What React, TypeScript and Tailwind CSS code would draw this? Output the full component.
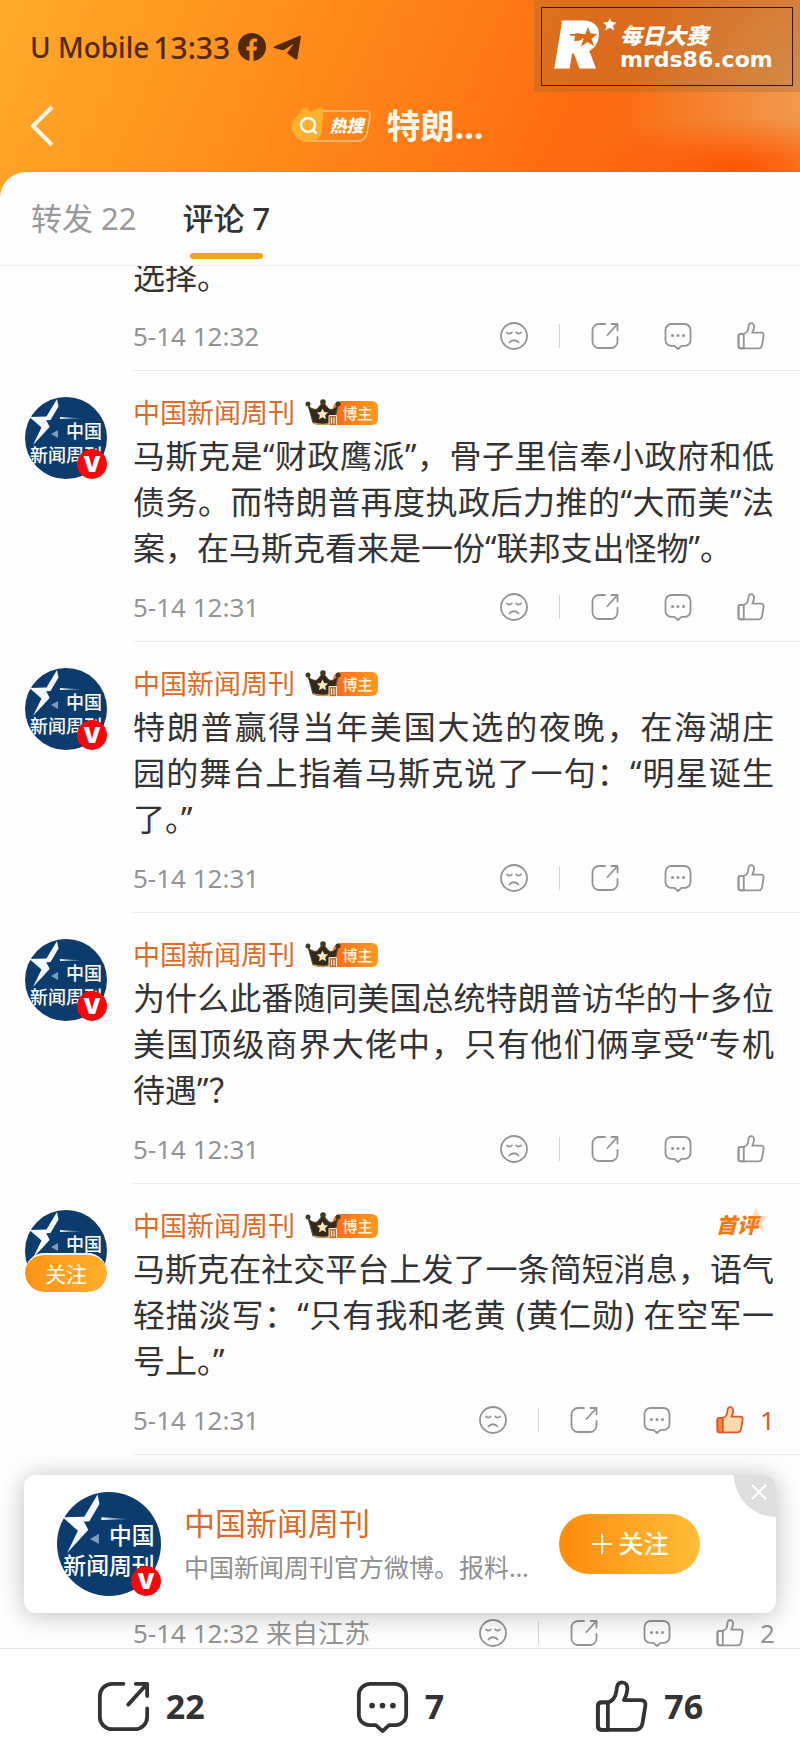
import type { ReactNode } from 'react';
import clsx from 'clsx';

type IconProps = { className?: string };

type Comment = {
  id: number;
  lines: string[];
  date: string;
  likes?: number;
  liked?: boolean;
  follow?: boolean;
  first?: boolean;
};

const comments: Comment[] = [
  {
    id: 1,
    lines: [
      '马斯克是“财政鹰派”，骨子里信奉小政府和低',
      '债务。而特朗普再度执政后力推的“大而美”法',
      '案，在马斯克看来是一份“联邦支出怪物”。',
    ],
    date: '5-14 12:31',
  },
  {
    id: 2,
    lines: [
      '特朗普赢得当年美国大选的夜晚，在海湖庄',
      '园的舞台上指着马斯克说了一句：“明星诞生',
      '了。”',
    ],
    date: '5-14 12:31',
  },
  {
    id: 3,
    lines: [
      '为什么此番随同美国总统特朗普访华的十多位',
      '美国顶级商界大佬中，只有他们俩享受“专机',
      '待遇”？',
    ],
    date: '5-14 12:31',
  },
  {
    id: 4,
    lines: [
      '马斯克在社交平台上发了一条简短消息，语气',
      '轻描淡写：“只有我和老黄 (黄仁勋) 在空军一',
      '号上。”',
    ],
    date: '5-14 12:31',
    likes: 1,
    liked: true,
    follow: true,
    first: true,
  },
];

function Svg({ className, children }: IconProps & { children: ReactNode }) {
  return (
    <svg
      viewBox="0 0 28 28"
      fill="none"
      stroke="currentColor"
      strokeLinecap="round"
      strokeLinejoin="round"
      className={className}
      aria-hidden="true"
    >
      {children}
    </svg>
  );
}

function SadIcon({ className }: IconProps) {
  return (
    <Svg className={className}>
      <circle cx="14" cy="14" r="13" />
      <path d="M7 10.5c1 1.4 3.6 1.4 4.8 0M16.2 10.5c1 1.4 3.6 1.4 4.8 0M9.5 20.5c2-3 7-3 9 0" />
    </Svg>
  );
}

function ShareIcon({ className }: IconProps) {
  return (
    <Svg className={className}>
      <path d="M14 2H8a6.5 6.5 0 0 0-6.5 6.5v11A6.5 6.5 0 0 0 8 26h12a6.5 6.5 0 0 0 6.5-6.5V15" />
      <path d="M20.5 2h6v6.5M26 2.5 16.5 13" />
    </Svg>
  );
}

function CommentIcon({ className }: IconProps) {
  return (
    <Svg className={className}>
      <path d="M7.5 2h13a6 6 0 0 1 6 6v10.3a5.5 5.5 0 0 1-5.5 5.5h-3.500L14 27l-3.500-3.200H7a5.500 5.500 0 0 1-5.500-5.500V8a6 6 0 0 1 6-6z" />
      <path strokeWidth="3" d="M8.500 13.500h.01M14 13.500h.01M19.500 13.500h.01" />
    </Svg>
  );
}

function LikeIcon({ className, filled }: IconProps & { filled?: boolean }) {
  return (
    <Svg className={className}>
      <path
        fill={filled ? '#ffd9ae' : 'none'}
        d="M3.500 11.800H6c3 0 5-2.800 5.300-6C11.500 2.600 12.200 1.200 14 1.200c2.200 0 3.200 1.500 3.100 3.600-.1 2.200-.8 4-1.800 5.800h9c1.700 0 2.600 1.200 2.300 3l-1.500 9.200c-.3 2-1.700 3.500-3.700 3.500H3.500c-1.200 0-2-.8-2-2V13.800c0-1.200.8-2 2-2z"
      />
      <path
        fill={filled ? '#f58a2e' : 'none'}
        d="M6.800 11.800v14.500H3.500c-1.200 0-2-.8-2-2V13.800c0-1.200.8-2 2-2z"
      />
    </Svg>
  );
}

function Avatar({ className }: IconProps) {
  return (
    <svg viewBox="0 0 82 82" className={className} role="img" aria-label="中国新闻周刊">
      <defs>
        <linearGradient id="trail" x1="0" x2="1">
          <stop offset="0" stopColor="#fff" />
          <stop offset="1" stopColor="#fff" stopOpacity="0" />
        </linearGradient>
        <clipPath id="disc">
          <circle cx="41" cy="41" r="41" />
        </clipPath>
      </defs>
      <circle cx="41" cy="41" r="41" fill="#0c3b6e" />
      <path
        fill="#f4faff"
        d="M32 2 33.500 9.500 25.500 23 18.500 23.500 24.500 30 8 48 16.500 30.500 4.500 20 21.500 19.500z"
      />
      <path fill="#f4faff" d="M12 21.500 20 21l4.500 8.500L14 41l3.500-11z" />
      <path fill="url(#trail)" d="M35 20v2l24-.5z" />
      <path fill="#7c9cc0" d="m26 37 7-4v8z" />
      <g
        fill="#fff"
        clipPath="url(#disc)"
        fontSize="18"
        fontWeight="500"
        fontFamily="'Noto Sans CJK SC', sans-serif"
      >
        <text x="41" y="41">中国</text>
        <text x="5" y="65">新闻周刊</text>
      </g>
    </svg>
  );
}

function VerifiedMark() {
  return (
    <span className="absolute right-0 bottom-0 flex size-[30px] items-center justify-center rounded-full bg-[#f7070c] font-['Inter'] text-[22px] leading-none font-black text-white">
      V
    </span>
  );
}

function AuthorBadge() {
  return (
    <span className="flex items-center">
      <svg viewBox="0 0 36 28" className="relative z-10 h-7 w-9" aria-hidden="true">
        <path fill="#33291c" stroke="#5b4a2a" d="M3 6c3 4 7 5 9 4l6-7 6 7c3 1 6 0 9-4l-4 18c-7 2-15 2-21 0z" />
        <path stroke="#c99b54" strokeWidth="1.500" d="M8 24c7 2 13 2 19 0" fill="none" />
        <g fill="#3f3a22">
          <circle cx="3" cy="5" r="2.500" />
          <circle cx="18" cy="3" r="2.800" />
          <circle cx="33" cy="5" r="2.500" />
        </g>
        <path fill="#ffe9bd" d="m17.500 9.500 1.700 3.600 3.900.5-2.900 2.700.8 3.900-3.500-1.900-3.500 1.900.8-3.900-2.900-2.700 3.900-.5z" />
        <path fill="#b5713a" stroke="#ffe3c0" d="M24 16.500h7.500v10H24z" />
        <path stroke="#fff" d="M26.500 18.500v6M29 18.500v6" />
      </svg>
      <span className="-ml-2 flex h-6 w-[45px] items-center justify-center rounded-r-md rounded-tl-lg bg-linear-to-r from-[#fa6a1c] to-[#ff9a1c] pl-1 text-[15px] font-medium text-[#fff3e0]">
        博主
      </span>
    </span>
  );
}

function Actions({ date, likes, liked }: { date: string; likes?: number; liked?: boolean }) {
  return (
    <div className="flex h-9 items-center justify-between text-[26px] text-[#949494]">
      <time className="leading-9">{date}</time>
      <div className={clsx('flex items-center stroke-[1.800]', likes === undefined && 'mr-[9px]')}>
        <button aria-label="踩">
          <SadIcon className="size-7" />
        </button>
        <span className="mx-[31px] h-6 w-px bg-[#d4d4d4]" />
        <div className="flex items-center gap-[45px]">
          <button aria-label="转发">
            <ShareIcon className="size-7" />
          </button>
          <button aria-label="评论">
            <CommentIcon className="size-7" />
          </button>
          <button aria-label="赞" className={clsx('flex items-center gap-4', liked && 'text-[#e2562c]')}>
            <LikeIcon className="size-7" filled={liked} />
            {likes !== undefined && <span className="w-[14px] text-center leading-9">{likes}</span>}
          </button>
        </div>
      </div>
    </div>
  );
}

function CommentRow({ comment }: { comment: Comment }) {
  return (
    <li className="flex pl-[25px]">
      <div className="relative mt-[26px] h-[82px] w-[82px] shrink-0">
        <Avatar className="size-full" />
        {comment.follow ? (
          <>
            <span className="absolute inset-x-0 bottom-0 h-7 bg-white" />
            <button className="absolute inset-x-0 bottom-0 h-[39px] rounded-full border-t-2 border-white bg-linear-to-r from-[#ff9417] to-[#ffae2b] text-[21px] leading-8 text-white">
              关注
            </button>
          </>
        ) : (
          <VerifiedMark />
        )}
      </div>
      <article className="ml-[26px] flex-1 border-b border-[#ebebeb] pt-[22px] pr-[26px] pb-4">
        <div className="flex h-10 items-center">
          <a href="#profile" className="mr-[10px] text-[27px] leading-10 text-[#dd6a28]">
            中国新闻周刊
          </a>
          <AuthorBadge />
          {comment.first && (
            <span className="relative mr-4 ml-auto text-[21px] font-black text-[#f07a12] italic">
              <svg viewBox="0 0 24 24" className="absolute -top-1 -right-3 size-7 fill-[#fde0c4]" aria-hidden="true">
                <path d="m12 1 3.200 7.300 7.800.7-5.900 5.200 1.800 7.800-6.900-4.200L5 22l1.900-7.800L1 9l7.800-.7z" />
              </svg>
              <span className="relative">首评</span>
            </span>
          )}
        </div>
        <p className="mb-[18px] text-[32px] leading-[46px] whitespace-nowrap text-[#333]">
          {comment.lines.map((line) => (
            <span key={line} className="block text-justify not-last:[text-align-last:justify]">
              {line}
            </span>
          ))}
        </p>
        <Actions date={comment.date} likes={comment.likes} liked={comment.liked} />
      </article>
    </li>
  );
}

function Watermark() {
  return (
    <div className="absolute top-0 right-0 h-[92px] w-[266px] bg-[#8a6a3a]/30 p-[7px] pb-[6px]">
      <div className="flex h-full items-center border border-[#3a1606] pl-3 text-white">
        <svg viewBox="0 0 66 60" className="h-[60px] w-[66px] shrink-0" aria-hidden="true">
          <text
            x="2"
            y="50"
            fill="#fff"
            stroke="#fff"
            strokeWidth="3"
            fontSize="62"
            fontWeight="900"
            fontStyle="italic"
            fontFamily="Inter, Roboto, sans-serif"
          >
            R
          </text>
          <path fill="#fff" d="M7 4h24v10H14z" />
          <path fill="#dc6812" d="m34 10 2.500 6.500 6.500.5-5.500 5 2.500 7-6.500-4-6.500 4.500 2.500-7.500-4.500-3-9-.5v-1.500h15.500z" />
          <path fill="#fff" d="m56 1 1.700 4 4.800.5-3.500 3.200 1 4.800-4.200-2.700-4.600 2.700 1.300-4.800-3.400-3.200 4.800-.5z" />
        </svg>
        <div className="shrink-0">
          <p className="text-[22px] leading-[26px] font-black italic">每日大赛</p>
          <p className="font-['DejaVu_Sans'] text-[22px] leading-6 font-bold">mrds86.com</p>
        </div>
      </div>
    </div>
  );
}

function Header() {
  return (
    <header className="relative h-[198px] shrink-0 bg-[radial-gradient(ellipse_160px_50px_at_92%_85%,#ff5500_0%,#ff550000_100%),radial-gradient(circle_at_104%_50%,#f3a057_0%,#f3a05700_24%),linear-gradient(115deg,#ffaa2b_0%,#ff9a22_20%,#ff8418_45%,#ff6c10_70%,#ee7420_100%)]">
      <div className="flex h-[94px] items-center pl-[30px] text-[28px] font-medium text-[#53290a]">
        <span>U Mobile</span>
        <span className="ml-1 text-[30px]">13:33</span>
        <svg viewBox="0 0 28 28" className="ml-2 size-7" aria-hidden="true">
          <circle cx="14" cy="14" r="14" fill="currentColor" />
          <path fill="#ff9420" d="M11.500 28V17.500H8.500V13.500h3v-2.500c0-3.600 2-5.500 5-5.500 1.300 0 2.500.2 2.500.2v3h-1.500c-1.500 0-2 .9-2 1.900v2.900h3.500l-.6 4h-2.900V28z" />
        </svg>
        <svg viewBox="0 0 28 28" className="ml-[7px] size-7" aria-hidden="true">
          <path fill="currentColor" d="M1 13.500 26 3c1.300-.5 2 .2 1.800 1.500L24.500 25c-.3 1.700-1.300 2-2.600 1.100L15 21c-1-.8-.9-1.400 0-2.300l6-8.200-9 5.800c-1.300.9-2.200 1-3.500.6L1.500 15c-1.200-.4-1.300-1-.5-1.500z" />
        </svg>
      </div>
      <div className="flex h-16 items-center justify-center px-7">
        <button aria-label="返回" className="absolute left-7">
          <svg viewBox="0 0 28 42" className="h-[42px] w-7" fill="none" stroke="#fff6e6" strokeWidth="4" aria-hidden="true">
            <path d="M24 2 5 21l19 19" />
          </svg>
        </button>
        <div className="flex items-center pr-6">
          <span className="relative flex h-[38px] w-20 items-center justify-end pr-[9px] text-[17px] font-black text-white italic">
            <svg viewBox="0 0 80 38" className="absolute inset-0 size-full" fill="none" aria-hidden="true">
              <path stroke="#ffc282" strokeWidth="1.500" d="M30 4h43c4 0 6 2 5 6l-3 16c-1 5-4 8-9 8H16" />
              <path fill="#fdb02e" d="M0 20C0 11 8 8 10 2l6-2c-1 4 1 5 4 4 4-1 6-3 10-4 1 4 2 7 1 12-1 4-1 7-1 11 0 7-6 12-14 12C6 35 0 28 0 20z" />
              <circle cx="16" cy="18" r="7" stroke="#fff" strokeWidth="2.500" />
              <path stroke="#fff" strokeWidth="2.500" strokeLinecap="round" d="m21 23 3 3" />
            </svg>
            <span className="relative">热搜</span>
          </span>
          <h1 className="ml-[14px] text-[34px] font-bold text-[#fff8ea]">特朗…</h1>
        </div>
      </div>
      <Watermark />
    </header>
  );
}

function FollowCard() {
  return (
    <aside className="absolute inset-x-6 bottom-[35px] flex h-[138px] items-center overflow-hidden rounded-xl bg-white/97 pl-[33px]">
      <div className="relative size-[104px] shrink-0">
        <Avatar className="size-full" />
        <VerifiedMark />
      </div>
      <div className="ml-[23px] min-w-0 flex-1">
        <h2 className="text-[31px] leading-[46px] text-[#dd6a28]">中国新闻周刊</h2>
        <p className="truncate text-[25px] leading-[42px] text-[#8f8f8f]">中国新闻周刊官方微博。报料…</p>
      </div>
      <button className="mr-[76px] flex h-[60px] w-[141px] shrink-0 items-center justify-center gap-1 rounded-full bg-linear-to-r from-[#ff8a04] to-[#ffbd38] text-[25px] font-medium text-[#fffbea]">
        <svg viewBox="0 0 24 24" className="size-6 stroke-current stroke-2" aria-hidden="true">
          <path d="M12 2v20M2 12h20" />
        </svg>
        关注
      </button>
      <button
        aria-label="关闭"
        className="absolute top-0 right-0 flex size-[42px] items-center justify-center rounded-bl-full bg-[#dedede] pb-2 pl-2"
      >
        <svg viewBox="0 0 16 16" className="size-4 stroke-white stroke-2" aria-hidden="true">
          <path d="m1 1 14 14M15 1 1 15" />
        </svg>
      </button>
    </aside>
  );
}

export default function App() {
  return (
    <div className="flex h-screen flex-col bg-[#fefefe] font-['Noto_Sans','Noto_Sans_CJK_SC',sans-serif]">
      <Header />

      <nav className="relative -mt-[26px] flex h-[94px] shrink-0 gap-[46px] rounded-tl-[26px] border-b border-[#f0f0f0] bg-[#fefefe] pl-[31px] text-[31px]">
        <button className="text-[#999]">转发 22</button>
        <button className="relative font-medium text-[#333]">
          评论 7
          <span className="absolute inset-x-[7px] bottom-[6px] h-[6px] rounded-full bg-[#efa41f]" />
        </button>
      </nav>

      <div className="relative min-h-0 flex-1">
        <main className="h-full overflow-hidden">
          <ul>
            <li className="-mt-3 ml-[133px] border-b border-[#ebebeb] pr-[26px] pb-4">
              <p className="mb-[18px] text-[32px] leading-[46px] text-[#333]">选择。</p>
              <Actions date="5-14 12:32" />
            </li>
            {comments.map((comment) => (
              <CommentRow key={comment.id} comment={comment} />
            ))}
            <li className="ml-[133px] pt-40 pr-[26px]">
              <Actions date="5-14 12:32 来自江苏" likes={2} />
            </li>
          </ul>
        </main>
        <div className="absolute inset-x-6 bottom-[35px] h-[138px] rounded-xl shadow-[0_2px_26px_rgba(0,0,0,0.25)]" />
        <FollowCard />
      </div>

      <footer className="flex h-[116px] shrink-0 border-t border-[#e6e6e6] bg-white px-[26px] text-[34px] font-bold text-[#333]">
        <button className="flex flex-1 items-center justify-center gap-4 stroke-2">
          <ShareIcon className="size-[53px]" />
          22
        </button>
        <button className="flex flex-1 items-center justify-center gap-4 stroke-2">
          <CommentIcon className="size-[53px]" />
          7
        </button>
        <button className="flex flex-1 items-center justify-center gap-4 stroke-2">
          <LikeIcon className="size-[53px]" />
          76
        </button>
      </footer>
    </div>
  );
}
